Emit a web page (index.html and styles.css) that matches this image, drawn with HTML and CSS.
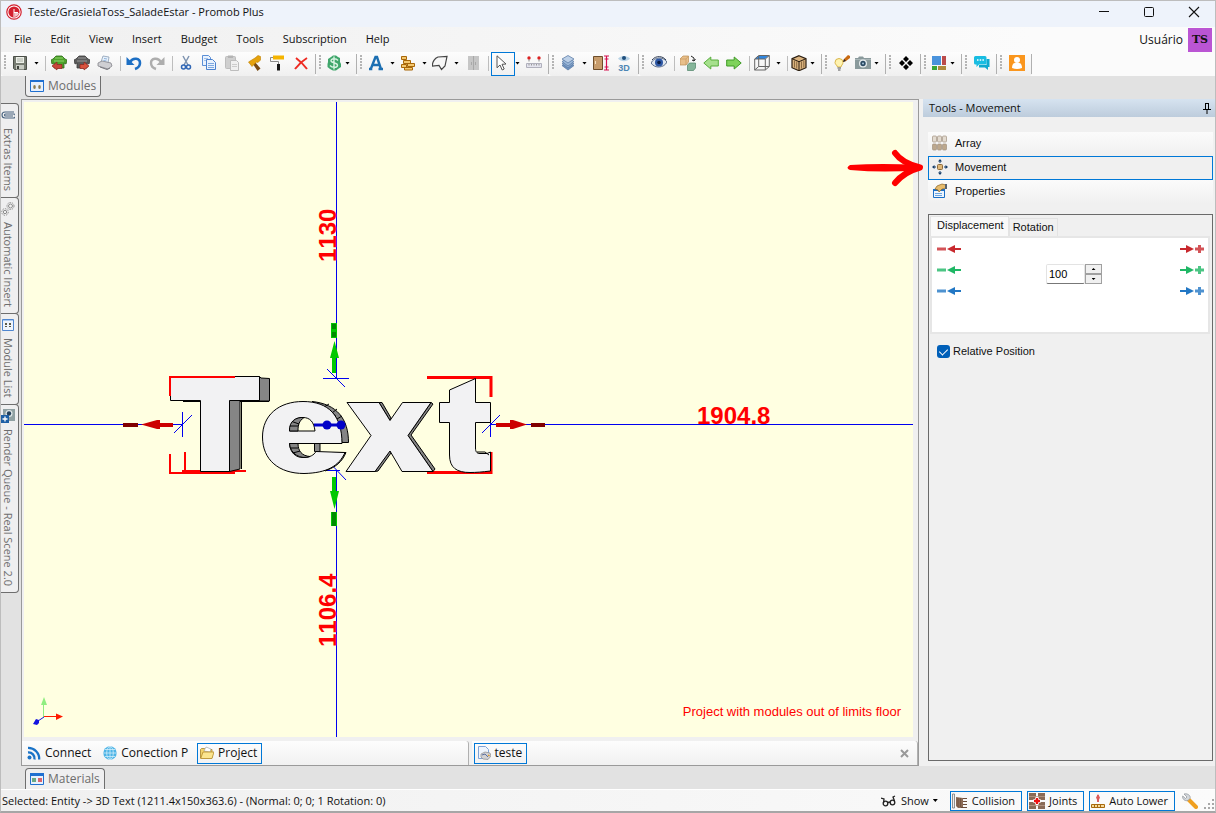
FILE: index.html
```html
<!DOCTYPE html>
<html lang="en">
<head>
  <meta charset="UTF-8">
  <meta name="viewport" content="width=device-width, initial-scale=1.0">
  <title>Teste/GrasielaToss_SaladeEstar - Promob Plus</title>
  <link rel="stylesheet" href="styles.css">
</head>
<body>
  <div class="window">

    <header class="titlebar">
      <svg class="app-icon" width="16" height="16" viewBox="0 0 16 16"><circle cx="8" cy="8" r="7.2" fill="#fff" stroke="#d3202e" stroke-width="1.2"/><circle cx="8" cy="8" r="5.6" fill="#d3202e"/><path d="M8 5v8M8 8.500h4" stroke="#fff" stroke-width="1"/><path d="M8.500 9h4.500a5.500 5.500 0 0 1-4.500 4z" fill="#f4c4c8"/></svg>
      <h1>Teste/GrasielaToss_SaladeEstar - Promob Plus</h1>
      <div class="window-buttons">
        <button aria-label="Minimize"><svg width="12" height="12" viewBox="0 0 12 12"><path d="M1 5.500h10" stroke="#111"/></svg></button>
        <button aria-label="Maximize"><svg width="12" height="12" viewBox="0 0 12 12"><rect x="1.500" y="1.500" width="9" height="9" rx="1" fill="none" stroke="#111"/></svg></button>
        <button aria-label="Close"><svg width="12" height="12" viewBox="0 0 12 12"><path d="M1 1l10 10M11 1L1 11" stroke="#111" stroke-width="1.1"/></svg></button>
      </div>
    </header>

    <div class="menubar">
      <nav class="menu">
        <button>File</button>
        <button>Edit</button>
        <button>View</button>
        <button>Insert</button>
        <button>Budget</button>
        <button>Tools</button>
        <button>Subscription</button>
        <button>Help</button>
      </nav>
      <div class="user">
        <span>Usuário</span>
        <span class="avatar">TS</span>
      </div>
    </div>

    <div class="toolbar">
      <div class="group">
        <button class="tool split" aria-label="Save"><svg width="16" height="16" viewBox="0 0 16 16"><path d="M1.500 1.500h13v13h-12l-1-1z" fill="#777c72" stroke="#4b4f48"/><path d="M4 2h8v6H4z" fill="#eef1ea"/><path d="M5 4h6M5 6h6" stroke="#a8ada2"/><path d="M4 10h8v4.500H4z" fill="#c9cdc4"/><path d="M5 11h2v3H5z" fill="#3e423c"/></svg><i class="caret"></i></button>
        <span class="sep"></span>
        <button class="tool" aria-label="Import"><svg width="16" height="16" viewBox="0 0 16 16"><path d="M2 4l3-3h6l3 3 2 1-1 4-2-1v5H3V8L1 9 0 5z" fill="#4ea32c" stroke="#2c6a18" stroke-width=".8"/><path d="M4 3h8M3 6h10" stroke="#8fd56a"/><path d="M1 11l5-4v2.500h5v4H6V15z" fill="#c9443a" stroke="#8c2620" stroke-width=".7"/></svg></button>
        <button class="tool" aria-label="Export"><svg width="16" height="16" viewBox="0 0 16 16"><path d="M2 4l3-3h6l3 3 2 1-1 4-2-1v5H3V8L1 9 0 5z" fill="#5c5c5c" stroke="#3a3a3a" stroke-width=".8"/><path d="M4 3h8M3 6h10" stroke="#999"/><path d="M15 11l-5-4v2.500H6v4h4V15z" fill="#d8523e" stroke="#8c2620" stroke-width=".7"/></svg></button>
        <button class="tool" aria-label="Print"><svg width="16" height="16" viewBox="0 0 16 16"><path d="M4 7l2-6 6 1-1 6z" fill="#e7f1fb" stroke="#8b9eb5" stroke-width=".8"/><path d="M7 3.500l3 .5M6.500 5.500l3 .5" stroke="#8fb2dc"/><path d="M1 8l4-2 9 2 1 3-4 3-10-3z" fill="#cfcfd3" stroke="#85858b" stroke-width=".8"/><path d="M3 12l7 2.500 3-1.500" stroke="#77777d" fill="none"/></svg></button>
        <span class="sep"></span>
        <button class="tool" aria-label="Undo"><svg width="16" height="16" viewBox="0 0 16 16"><path d="M4 7c3-5 10-4 10 1 0 3-2 5-5 6" fill="none" stroke="#1d6fc4" stroke-width="2.600"/><path d="M.5 2v8h8z" fill="#1d6fc4"/></svg></button>
        <button class="tool" aria-label="Redo"><svg width="16" height="16" viewBox="0 0 16 16"><path d="M12 7C9 2 2 3 2 8c0 3 2 5 5 6" fill="none" stroke="#adadad" stroke-width="2.400"/><path d="M15.500 2v8h-8z" fill="#adadad"/></svg></button>
        <span class="sep"></span>
        <button class="tool" aria-label="Cut"><svg width="16" height="16" viewBox="0 0 16 16"><path d="M5 1l5 9M11 1l-5 9" stroke="#7d93b0" stroke-width="1.500"/><circle cx="5.500" cy="12" r="2" fill="none" stroke="#2f66b5" stroke-width="1.500"/><circle cx="10.500" cy="12" r="2" fill="none" stroke="#2f66b5" stroke-width="1.500"/></svg></button>
        <button class="tool" aria-label="Copy"><svg width="16" height="16" viewBox="0 0 16 16"><path d="M1.500.5h6l2 2v8h-8z" fill="#e9f2fd" stroke="#5b8fd6"/><path d="M3 3.500h4M3 5.500h4" stroke="#9fc0ea"/><path d="M5.500 4.500h6l3 3v7h-9z" fill="#e9f2fd" stroke="#4c82cf"/><path d="M7 8.500h6M7 10.500h6M7 12.500h6" stroke="#7fa9e0"/></svg></button>
        <button class="tool" aria-label="Paste" disabled><svg width="16" height="16" viewBox="0 0 16 16"><rect x="1.500" y="1.500" width="10" height="12" rx="1" fill="#cfcfcf" stroke="#bdbdbd"/><path d="M4 .5h5v2.500H4z" fill="#b4b4b4"/><path d="M6.500 5.500h6l2 2v8h-8z" fill="#f0f0f0" stroke="#bdbdbd"/><path d="M8 9.500h5M8 11.500h5" stroke="#ccc"/></svg></button>
        <button class="tool" aria-label="Hammer"><svg width="16" height="16" viewBox="0 0 16 16"><path d="M8 7l5.500 6.500L10.500 16 6 9z" fill="#7a4a10"/><path d="M1.500 7L8 3l3-2.500 2.500 1V5L11 7.500 9.500 7 5 11.500z" fill="#e5a20c" stroke="#c08000" stroke-width=".6"/></svg></button>
        <button class="tool" aria-label="Paint"><svg width="16" height="16" viewBox="0 0 16 16"><path d="M3 .500h11v4H3z" fill="#f5b400"/><path d="M3 2.500H.5v4h8V9" fill="none" stroke="#8a8a8a"/><path d="M7 9h3v6.500H7z" fill="#161616"/></svg></button>
        <button class="tool" aria-label="Delete"><svg width="16" height="16" viewBox="0 0 16 16"><path d="M3 3c4 3 8 7 11 11M14 3C9 6 5 10 2 14" fill="none" stroke="#ee2b22" stroke-width="2"/></svg></button>
      </div>

      <div class="group">
        <button class="tool drop" aria-label="Budget"><svg width="16" height="16" viewBox="0 0 16 16"><path d="M5 2l2-1.500h3L12 2l2 1v4l1 2v3l-3 2-2 1.500H7L4 14l-2.500-2V9L2 7V4z" fill="#3fa66b"/><path d="M12 5.500C10 3 4.500 3.300 5 6c.4 2 6.500 1.500 6.500 4.200C11.500 13 6 13 4 10.500M8 1.500v13" fill="none" stroke="#d8f3e2" stroke-width="1.400"/></svg><i class="caret"></i></button>
      </div>

      <div class="group">
        <button class="tool split" aria-label="3D text"><svg width="16" height="16" viewBox="0 0 16 16"><path d="M1 14h3.300M10.500 14H15M3 13.500L7.500 2h1.500l3.800 11.500M5 10h6" fill="none" stroke="#1c6fb2" stroke-width="2.400"/></svg><i class="caret"></i></button>
        <button class="tool split" aria-label="Walls"><svg width="16" height="16" viewBox="0 0 16 16" fill="#f4c76e" stroke="#a86708"><path d="M1.500 1.500h5v3h-5zM3.500 5.500h7v3h-7zM1.500 9.500h5v3h-5zM7.500 8.500h7v3h-7zM4.500 12.500h8v2.500h-8z"/></svg><i class="caret"></i></button>
        <button class="tool split" aria-label="Polygon"><svg width="16" height="16" viewBox="0 0 16 16"><path d="M6 2l9-.5-2 9.500-3.500 3.500-2.500-4-6.500.5C0 7 3 3 6 2z" fill="#f7f7f7" stroke="#444" stroke-width="1.200"/></svg><i class="caret"></i></button>
        <button class="tool" aria-label="Door" disabled><svg width="16" height="16" viewBox="0 0 16 16"><path d="M3 1h11v14H3z" fill="#c6c6c6"/><path d="M8.500 1v14M6.500 7v3M10.500 7v3" stroke="#a8a8a8"/></svg></button>
        <span class="sep"></span>
        <button class="tool split checked" aria-label="Select"><svg width="16" height="16" viewBox="0 0 16 16"><path d="M4 .8v12l3-2.800 2.200 5 2-1L9 9.300l4-.3z" fill="#fff" stroke="#555"/></svg><i class="caret"></i></button>
        <button class="tool" aria-label="Measure"><svg width="16" height="16" viewBox="0 0 16 16"><circle cx="3" cy="3" r="1.700" fill="#d22"/><circle cx="13" cy="3" r="1.700" fill="#d22"/><path d="M3 4.500v2M13 4.500v2" stroke="#888"/><path d="M.5 8.500h15v4H.5z" fill="#e4e4ee" stroke="#b0b0bc"/><path d="M3 9v1.500M5.500 9v1.500M8 9v1.500M10.500 9v1.500M13 9v1.500" stroke="#999"/></svg></button>
      </div>

      <div class="group">
        <button class="tool split" aria-label="Layers"><svg width="16" height="16" viewBox="0 0 16 16" stroke="#5f7fa8" stroke-width=".8"><path d="M8 7l6 3.500-6 4.500-6-4.500z" fill="#6f93c0"/><path d="M8 5l6 3.500L8 13 2 8.500z" fill="#86a7cf"/><path d="M8 3l6 3.500L8 11 2 6.500z" fill="#9cb9da"/><path d="M8 .5l6 3.500-6 4-6-4z" fill="#bcd0e8"/></svg><i class="caret"></i></button>
        <button class="tool" aria-label="Wardrobe height"><svg width="16" height="16" viewBox="0 0 16 16"><path d="M.5 1.500h9v13h-9z" fill="#c79c6c" stroke="#6d4d2a"/><path d="M2.500 6v3" stroke="#f6e3c4"/><path d="M13.500 1v14M11 1h5M11 15h5M11.500 4h4M11.500 12h4" stroke="#d5104f" stroke-width="1.200"/></svg></button>
        <button class="tool" aria-label="3D view"><svg width="16" height="16" viewBox="0 0 16 16"><path d="M2 3.500C5 0 11 0 14 3.500 11 7 5 7 2 3.500z" fill="#b9d3e6"/><circle cx="8" cy="3" r="2" fill="#1f4f7d"/><text x="8" y="15.500" text-anchor="middle" class="icon-3d">3D</text></svg></button>
      </div>

      <div class="group">
        <button class="tool" aria-label="View"><svg width="16" height="16" viewBox="0 0 16 16"><path d="M0 8c3-6 12-7 16-1-3 6-12 7-16 1z" fill="#dfe6ef" stroke="#5d6f8c"/><circle cx="8" cy="7.500" r="4" fill="#2d57a5"/><circle cx="8" cy="7.500" r="1.800" fill="#0b1d44"/><path d="M1 5c4-5 11-4 14 0" fill="none" stroke="#333f55"/></svg></button>
        <span class="sep"></span>
        <button class="tool" aria-label="Replace"><svg width="16" height="16" viewBox="0 0 16 16"><path d="M0 4l3-3h5.500v6L6 10H0z" fill="#e8bf8a" stroke="#b98c54" stroke-width=".7"/><path d="M0 4h6v6M6 4l2.500-3" fill="none" stroke="#c79a60" stroke-width=".7"/><path d="M7.500 10l2-2h6v5l-2 2.500h-6z" fill="#86b59a" stroke="#4f8468" stroke-width=".7"/><path d="M11 1l3 2v3M15.500 4L14 6l-2-1" fill="none" stroke="#222"/></svg></button>
        <button class="tool" aria-label="Previous"><svg width="16" height="16" viewBox="0 0 16 16"><path d="M.8 8l7-6v3h7.500v6H7.800v3z" fill="#a6e08d" stroke="#58ad3d"/></svg></button>
        <button class="tool" aria-label="Next"><svg width="16" height="16" viewBox="0 0 16 16"><path d="M15.200 8l-7-6v3H.7v6h7.500v3z" fill="#7fd35c" stroke="#3f9a26"/></svg></button>
        <span class="sep"></span>
        <button class="tool split" aria-label="Faces"><svg width="16" height="16" viewBox="0 0 16 16"><path d="M1 4l4-3.500h10L11 4z" fill="#2f86df"/><path d="M.7 4h10.600v11H.7zM.7 4l4-3.500h10.600v11L11.300 15M11.300 4l4-3.500M4.700 1v10.500h10.600M4.700 11.500L.7 15" fill="none" stroke="#666"/></svg><i class="caret"></i></button>
        <span class="sep"></span>
        <button class="tool drop" aria-label="Textures"><svg width="16" height="16" viewBox="0 0 16 16"><path d="M8 .700l7 3v9l-7 3-7-3v-9z" fill="#d9b27e" stroke="#2a1d10" stroke-width="1.200"/><path d="M1 3.700l7 3 7-3M8 6.700v9" fill="none" stroke="#2a1d10"/><path d="M3.500 5.500v7M5.700 6.500v7M10.500 6.500v7M12.800 5.500v7" stroke="#7a5a34" stroke-width=".8"/></svg><i class="caret"></i></button>
      </div>

      <div class="group">
        <button class="tool" aria-label="Light"><svg width="16" height="16" viewBox="0 0 16 16"><path d="M5 3.500a4 4 0 0 1 4 4c0 2-2 3-2 4.500H3.500C3.500 10.500 1 9.500 1 7.500a4 4 0 0 1 4-4z" fill="#fff3b0" stroke="#d9b64a"/><path d="M3.500 13h3.500M4 15h2.500" stroke="#888" stroke-width="1.400"/><path d="M9 7l1-3 4-4 2 1v2l-4 3z" fill="#c96a12"/><path d="M9 7l1-3 2 2z" fill="#222"/></svg></button>
        <button class="tool drop" aria-label="Render"><svg width="16" height="16" viewBox="0 0 16 16"><path d="M0 3h3l1-1.500h4L9 3h7v11H0z" fill="#8a9a9c"/><path d="M0 4.500h16" stroke="#a9b6b8"/><circle cx="8" cy="8.500" r="4" fill="#e6ecee"/><circle cx="8" cy="8.500" r="2.700" fill="#2b4a63"/><circle cx="8" cy="8.500" r="1" fill="#a8c6dd"/></svg><i class="caret"></i></button>
      </div>

      <div class="group">
        <button class="tool" aria-label="Plugins"><svg width="16" height="16" viewBox="0 0 16 16"><path d="M8 1l3 3-3 3-3-3zM8 9l3 3-3 3-3-3zM4 5l3 3-3 3-3-3zM12 5l3 3-3 3-3-3z" fill="#000"/></svg></button>
      </div>

      <div class="group">
        <button class="tool drop" aria-label="Layout"><svg width="16" height="16" viewBox="0 0 16 16"><path d="M1 1h9v9H1z" fill="#4a93dc"/><path d="M11 1h4v9h-4z" fill="#bb4b4b"/><path d="M1 11h5v4H1z" fill="#3aa53a"/><path d="M7 11h8v4H7z" fill="#b08a3c"/></svg><i class="caret"></i></button>
      </div>

      <div class="group">
        <button class="tool" aria-label="Chat"><svg width="16" height="16" viewBox="0 0 16 16"><path d="M12.500 4h3v8H14v3l-3-2.500H5V10h7.500z" fill="#0fa9cf"/><path d="M1.500 1h9.500q1.500 0 1.500 1.500V8q0 1.500-1.500 1.500H5L2.500 12V9.500H1.500Q0 9.500 0 8V2.500Q0 1 1.500 1z" fill="#19bde2"/><path d="M3 5h1.500M5.700 5h1.500M8.400 5h1.500" stroke="#fff" stroke-width="1.500"/></svg></button>
      </div>

      <div class="group">
        <button class="tool" aria-label="Account"><svg width="16" height="16" viewBox="0 0 16 16"><path d="M0 0h16v16H0z" fill="#fa961e"/><circle cx="8" cy="5" r="3" fill="#fff"/><path d="M3 13c0-3 1-5 3-5h4c2 0 3 2 3 5q-5 2-10 0z" fill="#fff"/></svg></button>
      </div>
    </div>

    <div class="dock dock-top">
      <button class="dock-tab">
        <svg width="14" height="14" viewBox="0 0 14 14"><path d="M.5 1.500h13v11H.5z" fill="#e8f0fb" stroke="#1f6fd0"/><path d="M0 1h14v2H0z" fill="#1f6fd0"/><ellipse cx="4.500" cy="8" rx="1.300" ry="2" fill="#8a7a50"/><ellipse cx="9.500" cy="8" rx="1.300" ry="2" fill="#8a7a50"/></svg>
        Modules
      </button>
    </div>

    <main class="workspace">
      <aside class="side-tabs">
        <button class="side-tab">
          <svg width="14" height="14" viewBox="0 0 14 14"><path d="M13 4H4a3 3 0 0 0 0 6h8.500a2 2 0 0 0 0-4H4.500a1 1 0 0 0 0 2H12" fill="none" stroke="#48637f" stroke-width="1.100"/></svg>
          Extras Items
        </button>
        <button class="side-tab">
          <svg width="14" height="14" viewBox="0 0 14 14" fill="none" stroke="#8c8c8c"><circle cx="9.500" cy="4" r="3.500" stroke-dasharray="1.500 1"/><circle cx="9.500" cy="4" r="2"/><circle cx="4" cy="10" r="3.300" stroke-dasharray="1.500 1"/><circle cx="4" cy="10" r="1.700"/></svg>
          Automatic Insert
        </button>
        <button class="side-tab">
          <svg width="14" height="14" viewBox="0 0 14 14"><path d="M1.500 1.500h11v11h-11z" fill="#eef4fc" stroke="#4f86cf"/><path d="M2 2h10v1H2z" fill="#a9c8ee"/><path d="M4 5h2v2H4zM8 5h2v2H8zM4 8h2v1H4zM8 8h2v1H8z" fill="#5a5a48"/></svg>
          Module List
        </button>
        <button class="side-tab">
          <svg width="14" height="14" viewBox="0 0 14 14"><path d="M2 0h12v12H2z" fill="#8fa0a2"/><circle cx="8" cy="4.500" r="3.500" fill="#dfe6e8"/><circle cx="8" cy="4.500" r="2.200" fill="#24405a"/><path d="M0 6h8v8H0z" fill="#1e5fa5"/><path d="M4 7.500v5M1.500 10h5" stroke="#fff" stroke-width="1.300"/></svg>
          Render Queue - Real Scene 2.0
        </button>
      </aside>

      <section class="viewport">
        <div class="canvas">
          <svg class="scene" viewBox="24 102 889 635" preserveAspectRatio="xMidYMid slice">
            <!-- guide lines -->
            <g class="guides">
              <path d="M24 424.500H183M490 424.500H913M336.500 102V378.500M336.500 470V737"/>
              <path d="M182.500 412V437M174 433L192 415M490.500 420V437M482 433L500 415"/>
              <path d="M323 378.500H349M327 369L345 387M323 470.500H340M328 461L346 480"/>
            </g>

            <!-- selection brackets -->
            <g class="brackets">
              <path d="M170 396V377H235M170 454V473H235M185 452V471M182 471H246"/>
              <path d="M427 377.500H491V397M427 472.500H491V452" stroke-width="3"/>
            </g>

            <!-- T -->
            <g class="solid">
              <path class="shade" d="M259.500 376.500L261 378 269.500 378.500V401H259.500zM229.500 400.500H240V469L229.500 471.500z"/>
              <path d="M241.500 401V469M183 401.500H200M240 401.500H269" fill="none"/>
              <path d="M170.500 376.500H259.500V400.500H229.500V471.500H200.500V400.500H170.500z"/>
            </g>
            <path class="bracket-front" d="M170 396V377H235M182 471H200"/>

            <!-- e -->
            <g class="solid">
              <path class="shade" d="M312 401.500C337 404 348.500 419 348.500 442.500H342L335 415zM322 452.500H346C342 462 336 467 325 471L316 460z"/>
              <path d="M329 404L324 407M337 409L332 413M342 416L337 419M346 424L340 427" fill="none"/>
              <path class="shade" d="M314.500 443.500H320V451.500H314.500z"/>
              <path fill-rule="evenodd" d="M342 443.500H289.500C290 453 296 457.500 303 457.500 310 457.500 314 455 316 451.500L345 452.500C339 466 327 473 304 473.500 279 473.500 262.500 460 262.500 437 262.500 415 279 401.500 303 401.500 329 401.500 342 416 342 443.500zM289.500 431H315C314 422 310 417.500 303 417.500 295 417.500 290 422 289.500 431z"/>
              <path class="shade" d="M289.500 431C289 421 296 417 304 417.500 299 421 298 425 298 431zM289.500 443.500H298C298 451 302 456 310 456.500 301 460 290 454 289.500 443.500z"/>
              <path d="M290 426H298M292 421.500L299 424M290 448H298M293 453L300 451" fill="none"/>
            </g>

            <!-- x -->
            <g class="solid">
              <path class="shade" d="M379 402.500H382L391 418 390 420.500zM390 449L391 453 378 471 375 471.500zM431 402.500L433 404 411 435 435 469 433 471.500 408 435.500z"/>
              <path d="M347 402.500H379L390 420.500 402.500 402.500H431L408 435.500 433 471.500H402L390 451 375 471.500H346L371 435.500z"/>
            </g>

            <!-- t -->
            <g class="solid">
              <path d="M449.500 390L475.500 378.500V402.500H490.500V422.500H475.500V448C475.500 452 477 453.500 480 453.500H487L490.500 452V471C482 472 476 472.500 470 472.500 457 472.500 449.500 468 449.500 455V422.500H439.500V402.500H449.500z"/>
              <path d="M477 452H485L489 455" fill="none"/>
            </g>

            <!-- axis handles -->
            <g fill="#0000c8">
              <path d="M314 423.500H342V426.500H314z"/>
              <circle cx="327" cy="425" r="4.500"/>
              <circle cx="341" cy="425" r="4.500"/>
            </g>
            <g fill="#c00">
              <path d="M141 424.500L157 420H160V423H173V427H160V429H157z"/>
              <path d="M527 424.500L513 420H510V423H496V427H510V429H513z"/>
              <path class="dark-red" d="M123 423H138V427H123zM531 423H545V427H531z"/>
            </g>
            <g fill="#00c800">
              <path d="M334.500 341L339 358H336V373H332V358H330z"/>
              <path d="M334.500 509L339 491H336V477H332V491H330z"/>
              <path d="M331 323H337V338H331zM331 512H337V526H331z"/>
              <path class="dark-green" d="M332 324H336V329H332zM332 332H336V337H332zM332 512H336V526H332z"/>
            </g>

            <!-- dimensions -->
            <g class="dimension">
              <text x="697" y="424">1904.8</text>
              <text transform="translate(336 262) rotate(-90)">1130</text>
              <text transform="translate(336 647) rotate(-90)">1106.4</text>
            </g>

            <!-- axis gizmo -->
            <path d="M43.500 717V705" stroke="#90ee80"/>
            <path d="M41 705L44 697 47 705z" fill="#90ee80"/>
            <path d="M44 716.500H57" stroke="#ff1a00"/>
            <path d="M56 713.500L63 716.500 56 720z" fill="#ff1a00"/>
            <path d="M44 717L38 721" stroke="#1414e0"/>
            <path d="M33 724L36 719 39 720V723L37 725z" fill="#1414e0"/>
          </svg>
          <p class="warning">Project with modules out of limits floor</p>
        </div>

        <div class="view-tabs">
          <div class="view-group">
            <button class="view-tab">
              <svg width="14" height="14" viewBox="0 0 14 14"><circle cx="2.500" cy="11.500" r="2" fill="#1a73c7"/><path d="M1 6.500a6 6 0 0 1 6.500 7M1 1.800A11 11 0 0 1 12.200 13.500" fill="none" stroke="#1a73c7" stroke-width="2.300"/></svg>
              Connect
            </button>
            <button class="view-tab">
              <svg width="14" height="14" viewBox="0 0 14 14"><circle cx="7" cy="7" r="6.700" fill="#4db4e6"/><path d="M.5 7h13M7 .5v13M2 3.500h10M2 10.500h10" stroke="#d2eefa" stroke-width=".8"/><ellipse cx="7" cy="7" rx="3.300" ry="6.500" fill="none" stroke="#d2eefa" stroke-width=".8"/></svg>
              Conection P
            </button>
            <button class="view-tab checked">
              <svg width="14" height="14" viewBox="0 0 14 14"><path d="M.5 12V3.500l1-1h3l1 1h6.500V12z" fill="#f2d36c" stroke="#a6812a" stroke-width=".8"/><path d="M4 5l2-4 5 2-1 3z" fill="#fff" stroke="#999" stroke-width=".6"/><path d="M.7 12.500L3 6h11l-2 6.500z" fill="#fbe58f" stroke="#b58c28" stroke-width=".8"/></svg>
              Project
            </button>
          </div>
          <div class="view-group">
            <button class="view-tab checked">
              <svg width="14" height="14" viewBox="0 0 14 14"><path d="M1.500.500h7l3 3v9h-10z" fill="#eff5fd" stroke="#7fa3d6"/><path d="M4 8l4-2 5 1 1 3-3 3.500-5-.5-2-2z" fill="#d2d2d4" stroke="#8b8b8d" stroke-width=".7"/><path d="M5 9l3-1 3 3" stroke="#5a6fa0" fill="none"/><path d="M11 9l1.500 1" stroke="#d7962c" stroke-width="1.500"/></svg>
              teste
            </button>
            <button class="close-tab" aria-label="Close view"><svg width="9" height="9" viewBox="0 0 9 9"><path d="M1 1l7 7M8 1L1 8" stroke="#999" stroke-width="2"/></svg></button>
          </div>
        </div>
      </section>

      <aside class="tools-panel">
        <div class="panel-title">
          <h2>Tools - Movement</h2>
          <button aria-label="Pin"><svg width="8" height="11" viewBox="0 0 8 11"><path d="M2 .500h4M2.500 .500v6M5.500 .500v6M0 6.500h8M4 7v4" stroke="#000" fill="none"/><path d="M5 1h1v5.500H5z"/></svg></button>
        </div>
        <div class="tool-list">
          <button>
            <svg width="16" height="16" viewBox="0 0 16 16" stroke="#a09080" stroke-width=".7"><g fill="#e3dbd0"><rect x=".5" y="1" width="4" height="6" rx="1"/><rect x="5.500" y="1" width="4" height="6" rx="1"/><rect x="10.500" y="1" width="4" height="6" rx="1"/></g><g fill="#bda88d"><rect x=".5" y="9" width="4" height="6" rx="1"/><rect x="5.500" y="9" width="4" height="6" rx="1"/><rect x="10.500" y="9" width="4" height="6" rx="1"/></g></svg>
            Array
          </button>
          <button class="checked">
            <svg width="16" height="16" viewBox="0 0 16 16"><rect x="5.500" y="5.500" width="5" height="5" rx="1" fill="#e0b878" stroke="#8d6a3a"/><path d="M8 0l2 2.500H6zM8 16l2-2.500H6zM0 8l2.500-2v4zM16 8l-2.500-2v4z" fill="#123a66"/><path d="M8 2v2M8 12v2M2 8h2M12 8h2" stroke="#123a66"/></svg>
            Movement
          </button>
          <button>
            <svg width="16" height="16" viewBox="0 0 16 16"><path d="M1.500 6.500h11v8h-11z" fill="#eef5fd" stroke="#1b6fc6"/><path d="M1 6h12v2H1z" fill="#1b6fc6"/><path d="M3 10.500h7M3 12.500h7" stroke="#6ba5e0"/><path d="M3 6l2-3 5-2 4 1v3l-4 1-3 3-1-2z" fill="#e7bc6d" stroke="#8a6220" stroke-width=".7"/><path d="M13 1h2v5h-2z" fill="#58626e"/></svg>
            Properties
          </button>
        </div>

        <div class="panel-box">
          <div class="tabs" role="tablist">
            <button class="tab active" role="tab" aria-selected="true">Displacement</button>
            <button class="tab" role="tab" aria-selected="false">Rotation</button>
          </div>
          <div class="tab-page">
            <div class="steps">
              <button class="red" aria-label="X minus"><svg width="24" height="8" viewBox="0 0 24 8"><path d="M0 2.500h9v3H0z" opacity=".8"/><path d="M10 4l8-4v3h6v2h-6v3z"/></svg></button>
              <button class="green" aria-label="Y minus"><svg width="24" height="8" viewBox="0 0 24 8"><path d="M0 2.500h9v3H0z" opacity=".8"/><path d="M10 4l8-4v3h6v2h-6v3z"/></svg></button>
              <button class="blue" aria-label="Z minus"><svg width="24" height="8" viewBox="0 0 24 8"><path d="M0 2.500h9v3H0z" opacity=".8"/><path d="M10 4l8-4v3h6v2h-6v3z"/></svg></button>
            </div>
            <div class="spinner">
              <input type="text" value="100" aria-label="Displacement value">
              <div class="spin-buttons">
                <button aria-label="Increase"><i class="up"></i></button>
                <button aria-label="Decrease"><i class="down"></i></button>
              </div>
            </div>
            <div class="steps">
              <button class="red" aria-label="X plus"><svg width="24" height="8" viewBox="0 0 24 8"><path d="M15 2.500h3V0h3v2.500h3v3h-3V8h-3V5.500h-3z" opacity=".8"/><path d="M14 4L6 0v3H0v2h6v3z"/></svg></button>
              <button class="green" aria-label="Y plus"><svg width="24" height="8" viewBox="0 0 24 8"><path d="M15 2.500h3V0h3v2.500h3v3h-3V8h-3V5.500h-3z" opacity=".8"/><path d="M14 4L6 0v3H0v2h6v3z"/></svg></button>
              <button class="blue" aria-label="Z plus"><svg width="24" height="8" viewBox="0 0 24 8"><path d="M15 2.500h3V0h3v2.500h3v3h-3V8h-3V5.500h-3z" opacity=".8"/><path d="M14 4L6 0v3H0v2h6v3z"/></svg></button>
            </div>
          </div>
          <label class="check"><input type="checkbox" checked> Relative Position</label>
        </div>

        <svg class="pointer" width="80" height="40" viewBox="0 0 80 40"><path d="M4 17Q36 15 72 17L72 22Q40 25 4 22Q-1 20 4 17z" fill="#f00"/><path d="M49 5Q56 15 74 19.500Q58 24 49 35" fill="none" stroke="#f00" stroke-width="6" stroke-linecap="round" stroke-linejoin="round"/></svg>
      </aside>
    </main>

    <div class="dock dock-bottom">
      <button class="dock-tab">
        <svg width="14" height="14" viewBox="0 0 14 14"><path d="M.5 1.500h13v11H.5z" fill="#e8f0fb" stroke="#1f6fd0"/><path d="M0 1h14v3H0z" fill="#1f6fd0"/><path d="M2 6h4v4H2z" fill="#6aa884"/><path d="M8 6h4v4H8z" fill="#d9646c"/></svg>
        Materials
      </button>
    </div>

    <footer class="statusbar">
      <span class="status-text">Selected: Entity -&gt; 3D Text (1211.4x150x363.6) - (Normal: 0; 0; 1 Rotation: 0)</span>
      <button class="status-button plain">
        <svg width="16" height="16" viewBox="0 0 16 16" fill="none" stroke="#222" stroke-width="1.300"><path d="M0 5l3 1-.5 4M14 3l-2 1 1.500 4"/><circle cx="4.500" cy="10.500" r="2.300"/><circle cx="11.500" cy="9.500" r="2.300"/><path d="M7 9.500l2-.5"/></svg>
        Show <i class="caret"></i>
      </button>
      <button class="status-button checked">
        <svg width="16" height="16" viewBox="0 0 16 16"><path d="M.5 1h2v14h-2z" fill="#eee" stroke="#777" stroke-width=".8"/><path d="M4 4l7 1v10H6L4 13z" fill="#8a6a55"/><path d="M6 5v9M8.500 5v9" stroke="#6a4c3a" stroke-width=".7"/><path d="M11 5.500h4M11 8.500h4M11 11.500h4M9 14.500h6" stroke="#6a4c3a"/></svg>
        Collision
      </button>
      <button class="status-button checked">
        <svg width="16" height="16" viewBox="0 0 16 16"><path d="M0 0h7v7H0zM9 0h7v7H9zM0 9h7v7H0zM9 9h7v7H9z" fill="#8a6a55"/><path d="M0 3.500h16M0 12.500h16" stroke="#b79b88" stroke-width=".8"/><path d="M8 4.500v7M4.500 8h7" stroke="#fff" stroke-width="4"/><path d="M8 5v6M5 8h6" stroke="#e11" stroke-width="2.400"/></svg>
        Joints
      </button>
      <button class="status-button checked">
        <svg width="14" height="16" viewBox="0 0 14 16"><path d="M7 2v7" stroke="#c22" stroke-width="1.400"/><path d="M7 1l2 3.500L7 9 5 4.500z" fill="#dd5a5a"/><path d="M.5 11.500h13v3H.5z" fill="#f6d99a" stroke="#a8690c"/><path d="M3.500 12v2M6.500 12v2M9.500 12v2" stroke="#a8690c"/></svg>
        Auto Lower
      </button>
      <button class="status-button wrench" aria-label="Settings">
        <svg width="16" height="16" viewBox="0 0 16 16"><path d="M7 7l7 7" stroke="#f0a020" stroke-width="4" stroke-linecap="round"/><path d="M2 1l3 3-1.500 1.500L.7 3C0 6 3 8.500 6 7.500L8 5.500C9 3 6 0 2 1z" fill="#d4d8dc" stroke="#8d9298" stroke-width=".7"/></svg>
      </button>
      <svg class="size-grip" width="11" height="12" viewBox="0 0 11 12"><path d="M8 0h2v2H8zM4 4h2v2H4zM8 4h2v2H8zM0 8h2v2H0zM4 8h2v2H4zM8 8h2v2H8z" fill="#a8a8a8"/></svg>
    </footer>
  </div>
</body>
</html>
```

FILE: styles.css
```css
* {
  box-sizing: border-box;
}
body {
  margin: 0;
  font-family: 'Open Sans', 'Noto Sans', sans-serif;
  font-size: 11px;
  line-height: 16px;
  color: #111;
}
button {
  display: flex;
  align-items: center;
  margin: 0;
  padding: 0;
  border: none;
  background: none;
  font: inherit;
  color: inherit;
}
svg {
  display: block;
  flex: none;
}
h1, h2, p {
  margin: 0;
  font-size: inherit;
  font-weight: normal;
}
.window {
  display: flex;
  flex-direction: column;
  height: 100vh;
  border: 1px solid #bdbdbd;
  border-bottom: 2px solid #a6a6a6;
  background: #e2e2e2;
}

/* title and menu */
.titlebar {
  display: flex;
  align-items: center;
  height: 26px;
  padding: 0 15px 5px 5px;
  background: #eef3fb;
}
.titlebar h1 {
  flex: 1;
  margin-left: 6px;
}
.window-buttons {
  display: flex;
  gap: 33px;
}
.menubar {
  display: flex;
  justify-content: space-between;
  height: 25px;
  padding: 0 3px 0 13px;
  background: linear-gradient(to right, #f0f0f0, #fbfbfb 85%);
}
.menu {
  display: flex;
  gap: 19px;
  padding-bottom: 2px;
}
.user {
  display: flex;
  align-items: center;
  gap: 5px;
  font-size: 12px;
}
.avatar {
  width: 24px;
  height: 24px;
  background: #ba55d3;
  font-family: 'DejaVu Serif', serif;
  font-size: 11px;
  font-weight: bold;
  line-height: 24px;
  text-align: center;
}

/* toolbar */
.toolbar {
  display: flex;
  height: 24px;
  background: #fbfbfb;
}
.group {
  position: relative;
  display: flex;
  align-items: center;
  padding: 0 4px 2px 8px;
  background: linear-gradient(#fdfdfd, #f0f0f0);
  border-radius: 0 0 3px 3px;
}
.group::before {
  content: '';
  position: absolute;
  left: 3px;
  top: 3px;
  width: 2px;
  height: 14px;
  background: repeating-linear-gradient(#b4b4b4 0 2px, transparent 2px 3px);
}
.group::after {
  content: '';
  position: absolute;
  right: 0;
  top: 2px;
  width: 1px;
  height: 20px;
  background: #b0b0b0;
}
.tool {
  justify-content: center;
  width: 23px;
  height: 22px;
}
.tool.split {
  position: relative;
  justify-content: flex-start;
  width: 32px;
  padding-left: 3px;
  gap: 6px;
}
.tool.drop {
  justify-content: flex-start;
  width: 29px;
  padding-left: 2px;
  gap: 3px;
}
.tool.checked::before {
  content: '';
  position: absolute;
  left: 1px;
  top: 0;
  width: 22px;
  height: 22px;
  border: 1px solid #0078d7;
}
.caret {
  width: 5px;
  height: 3px;
  background: #000;
  clip-path: polygon(0 0, 100% 0, 50% 100%);
}
.sep {
  width: 6px;
  height: 15px;
  background: linear-gradient(#bdbdbd, #bdbdbd) 4px 0 / 1px 100% no-repeat;
}
.icon-3d {
  font: bold 9px 'Liberation Sans', sans-serif;
  fill: #4b86b4;
}

/* docked tabs */
.dock {
  display: flex;
  height: 23px;
  padding-left: 24px;
}
.dock-bottom {
  align-items: flex-end;
}
.dock-tab {
  height: 21px;
  padding: 0 4px;
  gap: 4px;
  border: 1px solid #6e6e6e;
  background: #efeff0;
  font-size: 12px;
  color: #6d6d6d;
}
.dock-top .dock-tab {
  border-top: none;
  border-radius: 0 0 4px 4px;
}
.dock-bottom .dock-tab {
  border-bottom: none;
  border-radius: 4px 4px 0 0;
}

/* workspace */
.workspace {
  flex: 1;
  display: flex;
  min-height: 0;
}
.side-tabs {
  width: 20px;
  padding-top: 4px;
}
.side-tab {
  width: 18px;
  padding: 4px 3px 6px 0;
  gap: 6px;
  border: 1px solid #6e6e6e;
  border-left: none;
  border-radius: 0 4px 4px 0;
  background: #efeff0;
  writing-mode: vertical-rl;
  color: #6d6d6d;
}
.side-tab + .side-tab {
  margin-top: -1px;
}
.viewport {
  flex: 1;
  display: flex;
  flex-direction: column;
  min-width: 0;
  border: 1px solid #9a9a9a;
  background: #f0f0f0;
}
.canvas {
  position: relative;
  flex: 1;
  min-height: 0;
  margin: 2px 5px 4px 2px;
  background: #ffffe1;
}
.scene {
  width: 100%;
  height: 100%;
}
.guides {
  fill: none;
  stroke: #0000f0;
}
.brackets, .bracket-front {
  fill: none;
  stroke: #f00;
  stroke-width: 2;
}
.solid {
  fill: #f2f2f3;
  stroke: #000;
}
.shade {
  fill: #858585;
}
.dark-red {
  fill: #800000;
}
.dark-green {
  fill: #008a00;
}
.dimension {
  font: bold 24px 'Liberation Sans', sans-serif;
  font-kerning: none;
  fill: #f00;
}
.warning {
  position: absolute;
  right: 12px;
  bottom: 17px;
  font-family: 'Liberation Sans', sans-serif;
  font-size: 13px;
  color: #f00;
}
.view-tabs {
  display: flex;
  gap: 3px;
  height: 24px;
}
.view-group {
  flex: 1;
  display: flex;
  align-items: center;
  gap: 4px;
  padding: 0 8px 0 2px;
  border-right: 1px solid #b0b0b0;
  border-radius: 0 3px 0 0;
  background: linear-gradient(#fdfdfd, #f1f1f1);
}
.view-tab {
  height: 21px;
  padding: 0 4px 0 2px;
  gap: 4px;
  border: 1px solid transparent;
  font-size: 12px;
}
.checked.view-tab, .checked.status-button {
  border-color: #0078d7;
}
.close-tab {
  margin-left: auto;
}

/* tools panel */
.tools-panel {
  position: relative;
  display: flex;
  flex-direction: column;
  width: 296px;
  padding: 0 0 5px 4px;
  background: #f0f0f0;
}
.panel-title {
  display: flex;
  justify-content: space-between;
  height: 18px;
  padding: 1px 4px 0 6px;
  background: linear-gradient(#d6e3f0, #bdccdc);
}
.tool-list {
  margin: 15px 2px 10px 5px;
  font-family: 'Liberation Sans', sans-serif;
}
.tool-list button {
  width: 100%;
  height: 24px;
  padding: 0 3px 2px;
  gap: 7px;
  border: 1px solid transparent;
  background: linear-gradient(#fbfbfb, #f0f0f0) border-box;
}
.tool-list .checked {
  border-color: #0078d7;
  background: #f0f0f0;
}
.panel-box {
  flex: 1;
  margin: 0 2px 0 5px;
  padding: 1px 2px 0 1px;
  border: 1px solid #6a6a6a;
  font-family: 'Liberation Sans', sans-serif;
}
.tabs {
  display: flex;
  align-items: flex-end;
}
.tab {
  height: 18px;
  padding: 0 3px 1px;
  border: 1px solid #e3e3e3;
  border-bottom: none;
}
.tab.active {
  height: 20px;
  padding: 0 4px 3px 6px;
  background: #f9f9f9;
}
.tab-page {
  display: flex;
  justify-content: space-between;
  height: 98px;
  padding: 0 4px 0 5px;
  border: 2px solid #e6e6e6;
  background: #fff;
}
.steps button {
  height: 21px;
}
.steps .red {
  fill: #c8282d;
}
.steps .green {
  fill: #1fb765;
}
.steps .blue {
  fill: #2277c4;
}
.spinner {
  display: flex;
  width: 56px;
  height: 20px;
  margin: 26px 0 0 7px;
}
.spinner input {
  width: 39px;
  padding: 0 2px;
  border: 1px solid #e3e3e3;
  border-bottom-color: #777;
  border-radius: 2px;
  font: inherit;
}
.spin-buttons {
  flex: 1;
}
.spin-buttons button {
  justify-content: center;
  width: 100%;
  height: 10px;
  border: 1px solid #a0a0a0;
  background: #f0f0f0;
}
.up, .down {
  width: 4px;
  height: 2px;
  background: #000;
  clip-path: polygon(0 0, 100% 0, 50% 100%);
}
.up {
  clip-path: polygon(50% 0, 100% 100%, 0 100%);
}
.check {
  display: flex;
  align-items: center;
  gap: 3px;
  padding: 9px 0 0 7px;
}
.check input {
  appearance: none;
  display: flex;
  justify-content: center;
  width: 13px;
  height: 13px;
  margin: 0;
  border-radius: 3px;
  background: #005fb8;
}
.check input:checked::after {
  content: '';
  width: 4px;
  height: 7px;
  margin-top: 2px;
  border: solid #fff;
  border-width: 0 1px 1px 0;
  transform: rotate(45deg);
}
.pointer {
  position: absolute;
  left: -73px;
  top: 49px;
}

/* status bar */
.statusbar {
  display: flex;
  align-items: center;
  height: 22px;
  gap: 5px;
  padding-left: 1px;
  border-top: 1px solid #fff;
  background: linear-gradient(to right, #f0f0f0, #fbfbfb);
}
.status-text {
  flex: 1;
  white-space: nowrap;
}
.status-button {
  height: 20px;
  padding: 0 6px 0 1px;
  gap: 4px;
  border: 1px solid transparent;
}
.wrench {
  padding: 0 0 0 1px;
}
.size-grip {
  align-self: flex-end;
}
```
